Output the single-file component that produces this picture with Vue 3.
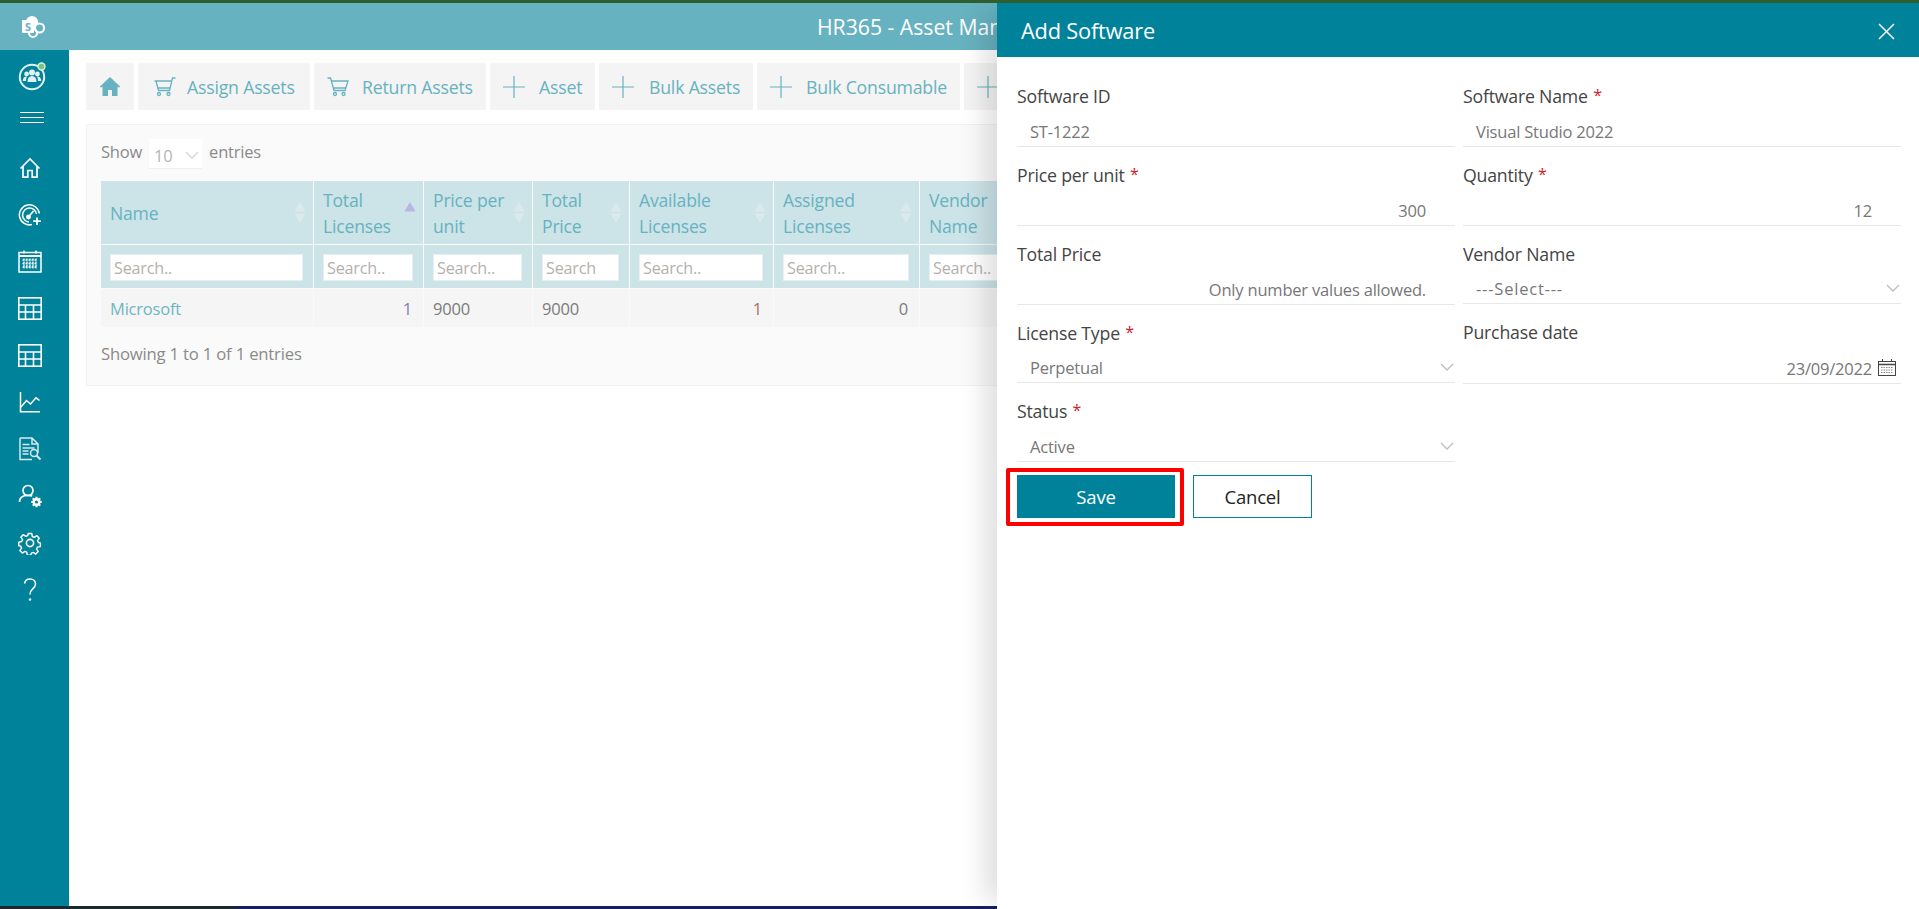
<script setup>
const columns = [
  { label: ['Name'], cls: 'c-name', ph: 'Search..', value: 'Microsoft', valueCls: 'link' },
  { label: ['Total', 'Licenses'], cls: 'c-total', ph: 'Search..', value: '1', valueCls: 'num blue', sorted: true },
  { label: ['Price per', 'unit'], cls: 'c-price', ph: 'Search..', value: '9000', valueCls: 'dark' },
  { label: ['Total', 'Price'], cls: 'c-tprice', ph: 'Search', value: '9000', valueCls: 'dark' },
  { label: ['Available', 'Licenses'], cls: 'c-avail', ph: 'Search..', value: '1', valueCls: 'num red' },
  { label: ['Assigned', 'Licenses'], cls: 'c-assign', ph: 'Search..', value: '0', valueCls: 'num dark' },
  { label: ['Vendor', 'Name'], cls: 'c-vendor', ph: 'Search..', value: '', valueCls: '' }
]
const tools = [
  { text: 'Assign Assets', icon: 'cart', cls: 't-assign' },
  { text: 'Return Assets', icon: 'cart2', cls: 't-return' },
  { text: 'Asset', icon: 'plus', cls: 't-asset' },
  { text: 'Bulk Assets', icon: 'plus', cls: 't-bulk' },
  { text: 'Bulk Consumable', icon: 'plus', cls: 't-cons' },
  { text: '', icon: 'plus', cls: 't-soft' }
]
</script>

<template>
  <div class="page">
    <header class="topbar">
      <svg class="logo" width="24" height="24" viewBox="0 0 24 24">
        <circle cx="10" cy="7" r="6" fill="#fff" />
        <circle cx="17.5" cy="13" r="4.6" fill="none" stroke="#fff" stroke-width="2" />
        <circle cx="11" cy="18" r="4" fill="none" stroke="#fff" stroke-width="2" />
        <rect x="0" y="5" width="12" height="13" rx="1" fill="#fff" />
        <text x="6" y="15.5" text-anchor="middle" class="logo-s">S</text>
      </svg>
      <div class="title">HR365 - Asset Man</div>
    </header>
    <div class="main">
      <nav class="side">
        <div class="s-team">
          <svg width="30" height="30" viewBox="0 0 30 30">
            <circle cx="14" cy="16" r="12.2" fill="none" stroke="#e4f1f3" stroke-width="2" />
            <circle cx="14" cy="11.6" r="3" fill="#e4f1f3" />
            <circle cx="8.6" cy="13" r="2.4" fill="#e4f1f3" />
            <circle cx="19.4" cy="13" r="2.4" fill="#e4f1f3" />
            <path d="M9.5 21c0-4 1.6-6 4.5-6s4.500 2 4.500 6zM4.800 20c0-3 1.300-4.600 3.700-4.600l.6.1C8.200 17 8 18.500 8 20zM23.200 20c0-3-1.300-4.600-3.700-4.600l-.6.1c.9 1.500 1.100 3 1.100 4.500z" fill="#e4f1f3" />
            <circle cx="23.500" cy="5.500" r="3.500" fill="#7cc47f" stroke="#d8f0d8" stroke-width="1.400" />
          </svg>
        </div>
        <div class="s-burger"><i></i><i></i><i></i></div>
        <div class="s-items">
          <div class="s-item">
            <svg width="22" height="22" viewBox="0 0 22 22" fill="none" stroke="#fff" stroke-width="1.700">
              <path d="M1.500 11.500 11 2l9.500 9.500M4 9.500V20.200h4.800v-6.700h4.400v6.700H18V9.500" />
            </svg>
          </div>
          <div class="s-item">
            <svg width="24" height="24" viewBox="0 0 24 24" fill="none" stroke="#fff" stroke-width="1.500">
              <path d="M14 21.500A10 10 0 1 1 21.300 10.500" />
              <path d="M11 19a7 7 0 1 1 7.500-8" />
              <path d="M10.500 14 15.500 8" stroke-width="1.600" />
              <circle cx="10.500" cy="14" r="1.700" fill="#fff" />
              <path d="M19 14.500v7.500M15.200 18.200h7.600" stroke-width="1.800" />
            </svg>
          </div>
          <div class="s-item">
            <svg width="24" height="23" viewBox="0 0 24 23" fill="none" stroke="#fff">
              <rect x="1" y="2.500" width="22" height="19.500" stroke-width="1.500" />
              <path d="M1 6h22" stroke-width="2" />
              <path d="M6 .5v3M18 .5v3" stroke-width="1.500" />
              <path d="M4.500 10h15M4.500 13.500h15M4.500 17h15M6 8.500v10M9 8.500v10M12 8.500v10M15 8.500v10M18 8.500v10" stroke-width="1.300" stroke-dasharray="2 1" />
            </svg>
          </div>
          <div class="s-item" v-for="n in 2" :key="n">
            <svg width="24" height="23" viewBox="0 0 24 23" fill="none" stroke="#fff" stroke-width="1.600">
              <rect x=".8" y=".8" width="22.400" height="21.400" />
              <path d="M.8 8h22.400M.8 15h22.400M7.500 8v14.200M15.500 8v14.200" />
            </svg>
          </div>
          <div class="s-item">
            <svg width="22" height="22" viewBox="0 0 22 22" fill="none" stroke="#fff" stroke-width="1.500">
              <path d="M1.500 1v19.700H21" />
              <path d="M2 16l5.500-6.500 4 3.500L17 6.800l3.500 2.700" />
            </svg>
          </div>
          <div class="s-item">
            <svg width="23" height="24" viewBox="0 0 23 24" fill="none" stroke="#d8eaee" stroke-width="1.500">
              <path d="M1 1h12l6 6v9M13 1v6h6M1 1v21.500h12" />
              <path d="M3.500 7.500h7M3.500 11h12M3.500 14h6M3.500 17h6" stroke-width="1.400" />
              <circle cx="15" cy="16" r="3.500" />
              <path d="M17.500 18.500 21.500 22.500" stroke-width="2" />
            </svg>
          </div>
          <div class="s-item">
            <svg width="24" height="24" viewBox="0 0 24 24" fill="none" stroke="#fff" stroke-width="1.700">
              <circle cx="10" cy="6.500" r="5" />
              <path d="M1.500 18c0-4.500 3.500-6.700 8.500-6.700 1.500 0 3 .2 4.200.8" />
              <circle cx="18.500" cy="18" r="2.800" stroke-width="2.400" />
              <path d="M18.500 12.800v2M18.500 21.200v2M13.300 18h2M21.700 18h2M14.800 14.300l1.400 1.400M20.800 20.300l1.400 1.400M22.200 14.300l-1.400 1.400M16.200 20.300l-1.400 1.400" stroke-width="2" />
            </svg>
          </div>
          <div class="s-item">
            <svg width="24" height="24" viewBox="0 0 24 24" fill="none" stroke="#fff" stroke-width="1.600" stroke-linejoin="round">
              <circle cx="12" cy="12" r="3.600" />
              <path d="M10 1.500h4l.6 3.300 2.100.9 2.800-1.900 2.800 2.800-1.900 2.800.9 2.100 2.200.5v4l-3.300.6-.9 2.100 1.900 2.800-2.800 2.800-2.800-1.900-2.100.9-.5 2.200h-4l-.6-3.300-2.100-.9-2.800 1.900-2.800-2.800 1.900-2.800-.9-2.100-2.200-.5v-4l3.300-.6.900-2.100-1.900-2.800 2.800-2.800 2.800 1.900 2.100-.9z" transform="translate(1.200 1.200) scale(.9)" />
            </svg>
          </div>
          <div class="s-item">
            <svg width="14" height="24" viewBox="0 0 14 24" fill="none" stroke="#fff" stroke-width="1.500">
              <path d="M1.500 5.500C2 2.800 4 1 7 1c3.300 0 5.500 2.100 5.500 5 0 2.200-1 3.500-2.800 4.800C8 12.200 7 13.500 7 16.500" />
              <circle cx="7" cy="21.500" r="1.200" fill="#fff" stroke="none" />
            </svg>
          </div>
        </div>
      </nav>

      <main class="content">
        <div class="toolbar">
          <div class="tool t-home">
            <svg width="20" height="19" viewBox="0 0 20 19" fill="#67b2c0">
              <path d="M10 0 0 9.500l1 1.300L2.500 9.500V19H8v-6h4v6h5.500V9.500l1.500 1.300 1-1.300z" />
            </svg>
          </div>
          <div v-for="t in tools" :key="t.cls" class="tool" :class="t.cls">
            <svg v-if="t.icon === 'cart'" width="22" height="20" viewBox="0 0 22 20" fill="none" stroke="#67b2c0" stroke-width="1.300">
              <path d="M.5 4H17M2 4l2.500 9.500h11L18.500 1H21.500M3 11h13" />
              <circle cx="5" cy="17" r="1.500" /><circle cx="14.500" cy="17" r="1.500" />
            </svg>
            <svg v-else-if="t.icon === 'cart2'" width="22" height="20" viewBox="0 0 22 20" fill="none" stroke="#67b2c0" stroke-width="1.300">
              <path d="M.5 1h3L7 13.500h11L21 4H4.300M6 11h13" />
              <circle cx="8" cy="17" r="1.500" /><circle cx="16.500" cy="17" r="1.500" />
            </svg>
            <svg v-else width="22" height="22" viewBox="0 0 22 22" stroke="#67b2c0" stroke-width="1.200">
              <path d="M11 0v22M0 11h22" />
            </svg>
            <span v-if="t.text">{{ t.text }}</span>
          </div>
        </div>

        <section class="card">
          <div class="len">
            <span>Show</span>
            <div class="len-box"><span>10</span><svg class="chev" width="14" height="8" viewBox="0 0 14 8"><path d="M1 1l6 6 6-6" fill="none" stroke="#d5d5d5" stroke-width="1.300" /></svg></div>
            <span>entries</span>
          </div>
          <div class="tbl">
            <div class="row r-head">
              <div v-for="c in columns" :key="c.cls" class="th" :class="c.cls">
                <div class="th-text"><div v-for="l in c.label" :key="l">{{ l }}</div></div>
                <svg v-if="c.cls !== 'c-vendor'" class="sort" width="12" height="21" viewBox="0 0 12 21">
                  <path d="M6 0l5.500 9.500H.5z" :fill="c.sorted ? '#b7b5e6' : '#dce9ec'" />
                  <path v-if="!c.sorted" d="M6 21l5.500-9.500H.5z" fill="#dce9ec" />
                </svg>
              </div>
            </div>
            <div class="row r-search">
              <div v-for="c in columns" :key="c.cls" class="ts" :class="c.cls">
                <div class="search">{{ c.ph }}</div>
              </div>
            </div>
            <div class="row r-data">
              <div v-for="c in columns" :key="c.cls" class="td" :class="[c.cls, c.valueCls]">{{ c.value }}</div>
            </div>
          </div>
          <div class="info">Showing 1 to 1 of 1 entries</div>
        </section>
      </main>
    </div>
    <div class="bottom"></div>

    <aside class="panel">
      <div class="p-head">
        <span>Add Software</span>
        <svg width="17" height="17" viewBox="0 0 17 17" stroke="#fff" stroke-width="1.500"><path d="M1 1l15 15M16 1 1 16" /></svg>
      </div>
      <div class="p-body">
        <div class="form">
          <div class="col">
            <div class="field">
              <div class="lab">Software ID</div>
              <div class="val">ST-1222</div>
            </div>
            <div class="field">
              <div class="lab">Price per unit <b>*</b></div>
              <div class="val right">300</div>
            </div>
            <div class="field">
              <div class="lab">Total Price</div>
              <div class="val right">Only number values allowed.</div>
            </div>
            <div class="field f78">
              <div class="lab">License Type <b>*</b></div>
              <div class="val sel">Perpetual
                <svg width="14" height="8" viewBox="0 0 14 8"><path d="M1 1l6 6 6-6" fill="none" stroke="#b9bec2" stroke-width="1.300" /></svg>
              </div>
            </div>
            <div class="field">
              <div class="lab">Status <b>*</b></div>
              <div class="val sel">Active
                <svg width="14" height="8" viewBox="0 0 14 8"><path d="M1 1l6 6 6-6" fill="none" stroke="#b9bec2" stroke-width="1.300" /></svg>
              </div>
            </div>
          </div>
          <div class="col">
            <div class="field">
              <div class="lab">Software Name <b>*</b></div>
              <div class="val">Visual Studio 2022</div>
            </div>
            <div class="field">
              <div class="lab">Quantity <b>*</b></div>
              <div class="val right">12</div>
            </div>
            <div class="field f78">
              <div class="lab">Vendor Name</div>
              <div class="val sel dash">---Select---
                <svg width="14" height="8" viewBox="0 0 14 8"><path d="M1 1l6 6 6-6" fill="none" stroke="#b9bec2" stroke-width="1.300" /></svg>
              </div>
            </div>
            <div class="field f80">
              <div class="lab">Purchase date</div>
              <div class="val date">23/09/2022
                <svg width="18" height="17" viewBox="0 0 18 17" fill="none" stroke="#444">
                  <rect x=".5" y="2.500" width="17" height="14" />
                  <path d="M.5 5.500h17" stroke-width="1.500" />
                  <path d="M4.500 0v3M13.500 0v3" />
                  <path d="M3 8.500h12M3 11h12M3 13.500h12" stroke="#888" stroke-dasharray="1.500 1" />
                </svg>
              </div>
            </div>
          </div>
        </div>
        <div class="actions">
          <button class="btn save">Save</button>
          <button class="btn cancel">Cancel</button>
        </div>
      </div>
    </aside>
  </div>
</template>

<style>
html, body { margin: 0; padding: 0; overflow: hidden; }
</style>

<style scoped>
.page {
  position: relative;
  width: 1919px;
  height: 909px;
  overflow: hidden;
  background: #fff;
  display: flex;
  flex-direction: column;
  border-top: 3px solid #2e5e2e;
  box-sizing: border-box;
  font-family: "Open Sans", "Noto Sans", sans-serif;
  font-size: 17px;
  letter-spacing: -0.2px;
}
.topbar {
  flex: none;
  height: 47px;
  background: #67b2c0;
  display: flex;
  align-items: center;
  position: relative;
}
.logo { margin-left: 22px; }
.logo-s { font: 700 11px "Open Sans", sans-serif; fill: #67b2c0; }
.title {
  position: absolute;
  left: 817px;
  top: 0;
  line-height: 47px;
  font-size: 21.200px;
  color: #fff;
  white-space: nowrap;
  letter-spacing: 0;
}
.main { flex: 1; display: flex; min-height: 0; }
.bottom { flex: none; height: 3px; background: linear-gradient(90deg, #1a2a2e 0, #1a2a2e 230px, #15205e 240px, #15205e 100%); }
.side { flex: none; width: 69px; background: #00829a; display: flex; flex-direction: column; }
.s-team { height: 52px; display: flex; align-items: center; justify-content: center; padding-right: 7px; padding-left: 3px; box-sizing: border-box; }
.s-burger { height: 30px; display: flex; flex-direction: column; justify-content: center; gap: 4px; padding-left: 20px; }
.s-burger i { display: block; width: 24px; height: 1px; background: #fff; }
.s-items { margin-top: 13px; display: flex; flex-direction: column; }
.s-item { height: 46.800px; display: flex; align-items: center; justify-content: center; padding-right: 9px; flex: none; }
.content { flex: 1; padding: 13px 16px 0 17px; min-width: 0; }
.toolbar { display: flex; gap: 4px; height: 47px; }
.tool {
  height: 47px;
  background: #f4f4f4;
  color: #67b2c0;
  display: flex;
  align-items: center;
  box-sizing: border-box;
  padding-left: 16px;
  flex: none;
  white-space: nowrap;
  font-size: 17.700px;
}
.tool span { margin-left: 11px; }
.t-home { width: 48px; padding-left: 14px; }
.t-assign { width: 172px; }
.t-return { width: 172px; padding-left: 13px; }
.t-return span { margin-left: 13px; }
.t-asset { width: 105px; padding-left: 13px; }
.t-asset span { margin-left: 14px; }
.t-bulk span { margin-left: 15px; }
.t-cons span { margin-left: 14px; }
.t-bulk { width: 154px; padding-left: 13px; }
.t-cons { width: 203px; padding-left: 13px; }
.t-soft { width: 180px; padding-left: 13px; }
.card {
  margin-top: 14px;
  height: 262px;
  box-sizing: border-box;
  background: #fafafa;
  border: 1px solid #f2f2f2;
  padding: 0 14px;
  width: 1200px;
}
.len { display: flex; align-items: center; gap: 7px; height: 56px; box-sizing: border-box; padding-bottom: 4px; color: #8a8a8a; font-size: 16.500px; }
.len-box {
  width: 53px; height: 30px; background: #fff; border-bottom: 1px solid #f0f0f0;
  box-sizing: border-box; display: flex; align-items: center; justify-content: space-between;
  padding: 4px 3px 0 5px; color: #b5b5b5; margin-top: 6px;
}
.chev { margin-top: -2px; }
.tbl { width: 1100px; }
.row { display: flex; }
.r-head { height: 63px; margin-bottom: 1px; }
.r-search { height: 43px; margin-bottom: 1px; }
.r-data { height: 38px; }
.th, .ts, .td { box-sizing: border-box; margin-right: 1px; flex: none; }
.c-name { width: 212px; }
.c-total { width: 109px; }
.c-price { width: 108px; }
.c-tprice { width: 96px; }
.c-avail { width: 143px; }
.c-assign { width: 145px; }
.c-vendor { width: 200px; }
.th {
  background: #cce4e8; color: #67b2c0; display: flex; align-items: center; justify-content: space-between;
  padding: 0 7px 0 9px; line-height: 25.500px; font-size: 17.600px;
}
.th-text { padding-top: 2px; }
.sort { flex: none; }
.ts { background: #cce4e8; padding: 9px 10px 0 9px; }
.search {
  height: 27px; background: #fff; box-sizing: border-box; color: #b5b0ac; padding-left: 3px;
  line-height: 27px; font-size: 16.200px; overflow: hidden; white-space: nowrap;
  border: 1px solid #e6eff1;
}
.td { background: #f5f5f5; line-height: 40px; padding: 0 9px; font-size: 16.500px; }
.td.link { color: #6fb6c4; }
.td.num { text-align: right; padding-right: 11px; }
.td.blue { color: #7f7fb4; }
.td.red { color: #a86e68; }
.td.dark { color: #7b7b7b; }
.info { margin-top: 17px; color: #8a8a8a; font-size: 16.700px; line-height: 20px; }
.panel {
  position: absolute;
  left: 997px;
  top: 0;
  bottom: 0;
  width: 922px;
  background: #fff;
  box-shadow: -20px 0 25px -8px rgba(0, 0, 0, 0.13);
  display: flex;
  flex-direction: column;
}
.p-head {
  flex: none; height: 54px; background: #00829a; color: #fff; display: flex; align-items: center;
  justify-content: space-between; padding: 0 24px 0 24px; font-size: 21.800px; letter-spacing: -0.2px;
}
.p-head svg { margin-top: 3px; }
.p-body { padding: 11px 18px 0 20px; }
.form { display: flex; gap: 8px; }
.col { width: 438px; }
.field { height: 79px; box-sizing: border-box; display: flex; flex-direction: column; border-bottom: 1px solid #e8e8e8; }
.f78 { height: 78px; }
.f80 { height: 80px; }
.lab { flex: 1; padding-top: 17px; line-height: 22px; color: #444; font-size: 17.700px; box-sizing: border-box; }
.lab b { color: #c8232c; font-weight: 400; font-size: 16px; margin-left: 1px; position: relative; top: -2px; }
.val { height: 28px; line-height: 28px; color: #777; font-size: 16.500px; padding-left: 13px; white-space: nowrap; display: flex; align-items: center; }
.right { justify-content: flex-end; padding-right: 29px; padding-left: 0; }
.sel { justify-content: space-between; padding-right: 1px; }
.sel svg { margin-top: -2px; }
.dash { letter-spacing: 0.8px; }
.date { justify-content: flex-end; padding-right: 5px; gap: 6px; }
.date svg { margin-top: -4px; }
.actions { display: flex; gap: 18px; margin-top: 13px; }
.btn { height: 43px; box-sizing: border-box; font-family: inherit; font-size: 18.500px; letter-spacing: -0.2px; }
.save { position: relative; width: 158px; background: #00829a; color: #fff; border: none; border-radius: 0; }
.save::after {
  content: "";
  position: absolute;
  left: -11px; right: -9px; top: -7px; bottom: -8px;
  border: 4px solid #f00;
  border-radius: 2px;
}
.cancel { width: 119px; background: #fff; color: #222; border: 1px solid #00829a; }
</style>
